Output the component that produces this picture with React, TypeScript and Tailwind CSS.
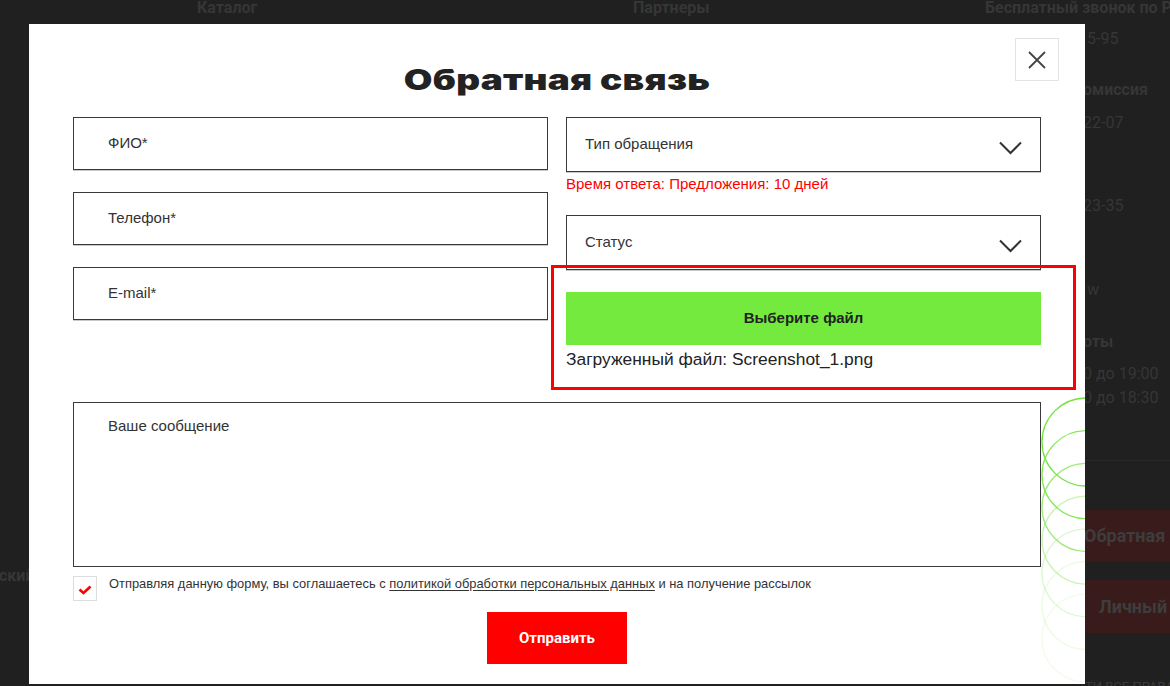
import React from "react";

const fieldLabels = ["ФИО*", "Телефон*", "E-mail*"];

const rightFragments = [
  { text: "5-95", top: "mt-[13px]", bold: false, pad: "pl-[4px]" },
  { text: "омиссия", top: "mt-[31px]", bold: true, pad: "pl-0" },
  { text: "22-07", top: "mt-[13px]", bold: false, pad: "pl-0" },
  { text: "23-35", top: "mt-[63px]", bold: false, pad: "pl-0" },
  { text: "w", top: "mt-[64px]", bold: false, pad: "pl-[4px]" },
  { text: "оты", top: "mt-[32px]", bold: true, pad: "pl-0" },
  { text: "0 до 19:00", top: "mt-[12px]", bold: false, pad: "pl-0" },
  { text: "0 до 18:30", top: "mt-[4px]", bold: false, pad: "pl-0" },
];

const circleOpacity = [1, 0.85, 0.7, 0.4, 0.25, 0.15, 0.1];

function Chevron() {
  return (
    <svg width="23" height="14" viewBox="0 0 23 14" fill="none" className="mt-[6px]">
      <path d="M1 1.5L11.5 12L22 1.5" stroke="#333333" strokeWidth="2" />
    </svg>
  );
}

function SelectBox({ label }: { label: string }) {
  return (
    <div className="flex h-[55px] items-center justify-between border border-[#3a3a3a] pl-[18px] pr-[18px] shadow-[0_1px_0_#c8c8c8]">
      <span className="text-[15px] text-[#333]">{label}</span>
      <Chevron />
    </div>
  );
}

function Circles() {
  return (
    <svg
      width="100"
      height="330"
      viewBox="0 0 100 330"
      fill="none"
      className="pointer-events-none absolute left-[1012px] top-[372px]"
    >
      {circleOpacity.map((opacity, index) => (
        <circle
          key={index}
          cx="45"
          cy={46 + index * 32.7}
          r="44"
          stroke="#74e33f"
          strokeWidth="1.3"
          strokeOpacity={opacity}
        />
      ))}
    </svg>
  );
}

export default function App() {
  return (
    <div className="relative h-[686px] w-[1170px] overflow-hidden bg-[#202020] font-['Liberation_Sans',sans-serif]">
      {/* page behind the overlay */}
      <div className="flex h-full flex-col font-['Roboto',sans-serif] text-[#363636]">
        <div className="grid h-[16px] grid-cols-[436px_352px_1fr] pl-[197px] text-[16px] font-bold leading-[16px]">
          <span>Каталог</span>
          <span>Партнеры</span>
          <span className="whitespace-nowrap">Бесплатный звонок по России</span>
        </div>
        <div className="flex min-w-0 flex-1">
          <div className="w-[1083px] shrink-0">
            <div className="mt-[550px] -ml-[1px] text-[16px] font-bold leading-[20px]">ский</div>
          </div>
          <div className="flex min-w-0 flex-1 flex-col whitespace-nowrap text-[16px] leading-[20px]">
            {rightFragments.map((item) => (
              <span key={item.text} className={`${item.top} ${item.pad} ${item.bold ? "font-bold" : ""}`}>
                {item.text}
              </span>
            ))}
            <div className="mt-[52px] h-px w-full bg-[#282828]" />
            <div className="mt-[49px] flex h-[52px] items-center bg-[#3a1b1b] pl-[1px] text-[18px] font-bold text-[#3d3d3d]">
              Обратная связь
            </div>
            <div className="mt-[18px] flex h-[53px] items-center bg-[#3a1b1b] pl-[16px] text-[18px] font-bold text-[#3d3d3d]">
              Личный кабинет
            </div>
            <span className="mt-[47px] pl-[2px] text-[13px] uppercase leading-[14px] text-[#3a3a3a]">ти все права</span>
          </div>
        </div>
      </div>

      {/* modal */}
      <div className="absolute left-[29px] top-[24px] h-[660px] w-[1056px] overflow-hidden bg-white">
        <Circles />

        <button
          type="button"
          className="absolute right-[26px] top-[14px] flex h-[43px] w-[44px] items-center justify-center border border-[#e3e3e3] bg-white"
        >
          <svg width="18" height="18" viewBox="0 0 18 18" fill="none">
            <path d="M1 1L17 17M17 1L1 17" stroke="#444444" strokeWidth="1.8" />
          </svg>
        </button>

        <div className="relative px-11 pt-[36px]">
          <h2 className="text-center text-[28px] leading-[40px] text-[#222]">
            <span className="inline-block scale-x-[1.32] font-['Inter',sans-serif] font-black tracking-[0.2px]">
              Обратная связь
            </span>
          </h2>

          <div className="mt-4 grid grid-cols-2 gap-x-[18px]">
            <div className="flex flex-col gap-[22px]">
              {fieldLabels.map((label) => (
                <div
                  key={label}
                  className="flex h-[53px] items-center border border-[#3a3a3a] pl-[34px] text-[15px] text-[#333] shadow-[0_1px_0_#c8c8c8]"
                >
                  {label}
                </div>
              ))}
            </div>

            <div className="flex flex-col">
              <SelectBox label="Тип обращения" />
              <p className="mt-[2px] text-[15px] leading-[20px] text-[#ff0000]">
                Время ответа: Предложения: 10 дней
              </p>
              <div className="mt-[21px]">
                <SelectBox label="Статус" />
              </div>
              <div className="relative mt-[22px]">
                <button
                  type="button"
                  className="flex h-[53px] w-full items-center justify-center bg-[#74ea3f] text-[15px] font-bold text-[#222]"
                >
                  Выберите файл
                </button>
                <p className="mt-[4px] text-[17.4px] leading-[20px] text-[#222]">
                  Загруженный файл: Screenshot_1.png
                </p>
                <div className="pointer-events-none absolute -bottom-[21px] -left-[15px] -right-[35px] -top-[27px] border-[3px] border-[#ff0000]" />
              </div>
            </div>
          </div>

          <div className="mt-[33px] h-[165px] border border-[#3a3a3a] pl-[34px] pt-[13px] text-[15px] leading-[20px] text-[#333]">
            Ваше сообщение
          </div>

          <div className="mt-[9px] flex items-start gap-[12px]">
            <div className="flex h-[25px] w-[24px] shrink-0 items-center justify-center border border-[#dddddd]">
              <svg width="14" height="10" viewBox="0 0 14 10" fill="none" className="mt-[3px]">
                <path d="M1.5 4.5L5.5 8L12.5 1.5" stroke="#ff0000" strokeWidth="2.6" />
              </svg>
            </div>
            <p className="-mt-px text-[12.9px] leading-[18px] text-[#333]">
              Отправляя данную форму, вы соглашаетесь с{" "}
              <a className="underline underline-offset-2">политикой обработки персональных данных</a> и на получение
              рассылок
            </p>
          </div>

          <button
            type="button"
            className="mx-auto mt-[11px] flex h-[52px] w-[140px] items-center justify-center bg-[#ff0000] font-['Roboto',sans-serif] text-[15px] font-bold text-white"
          >
            Отправить
          </button>
        </div>
      </div>
    </div>
  );
}
